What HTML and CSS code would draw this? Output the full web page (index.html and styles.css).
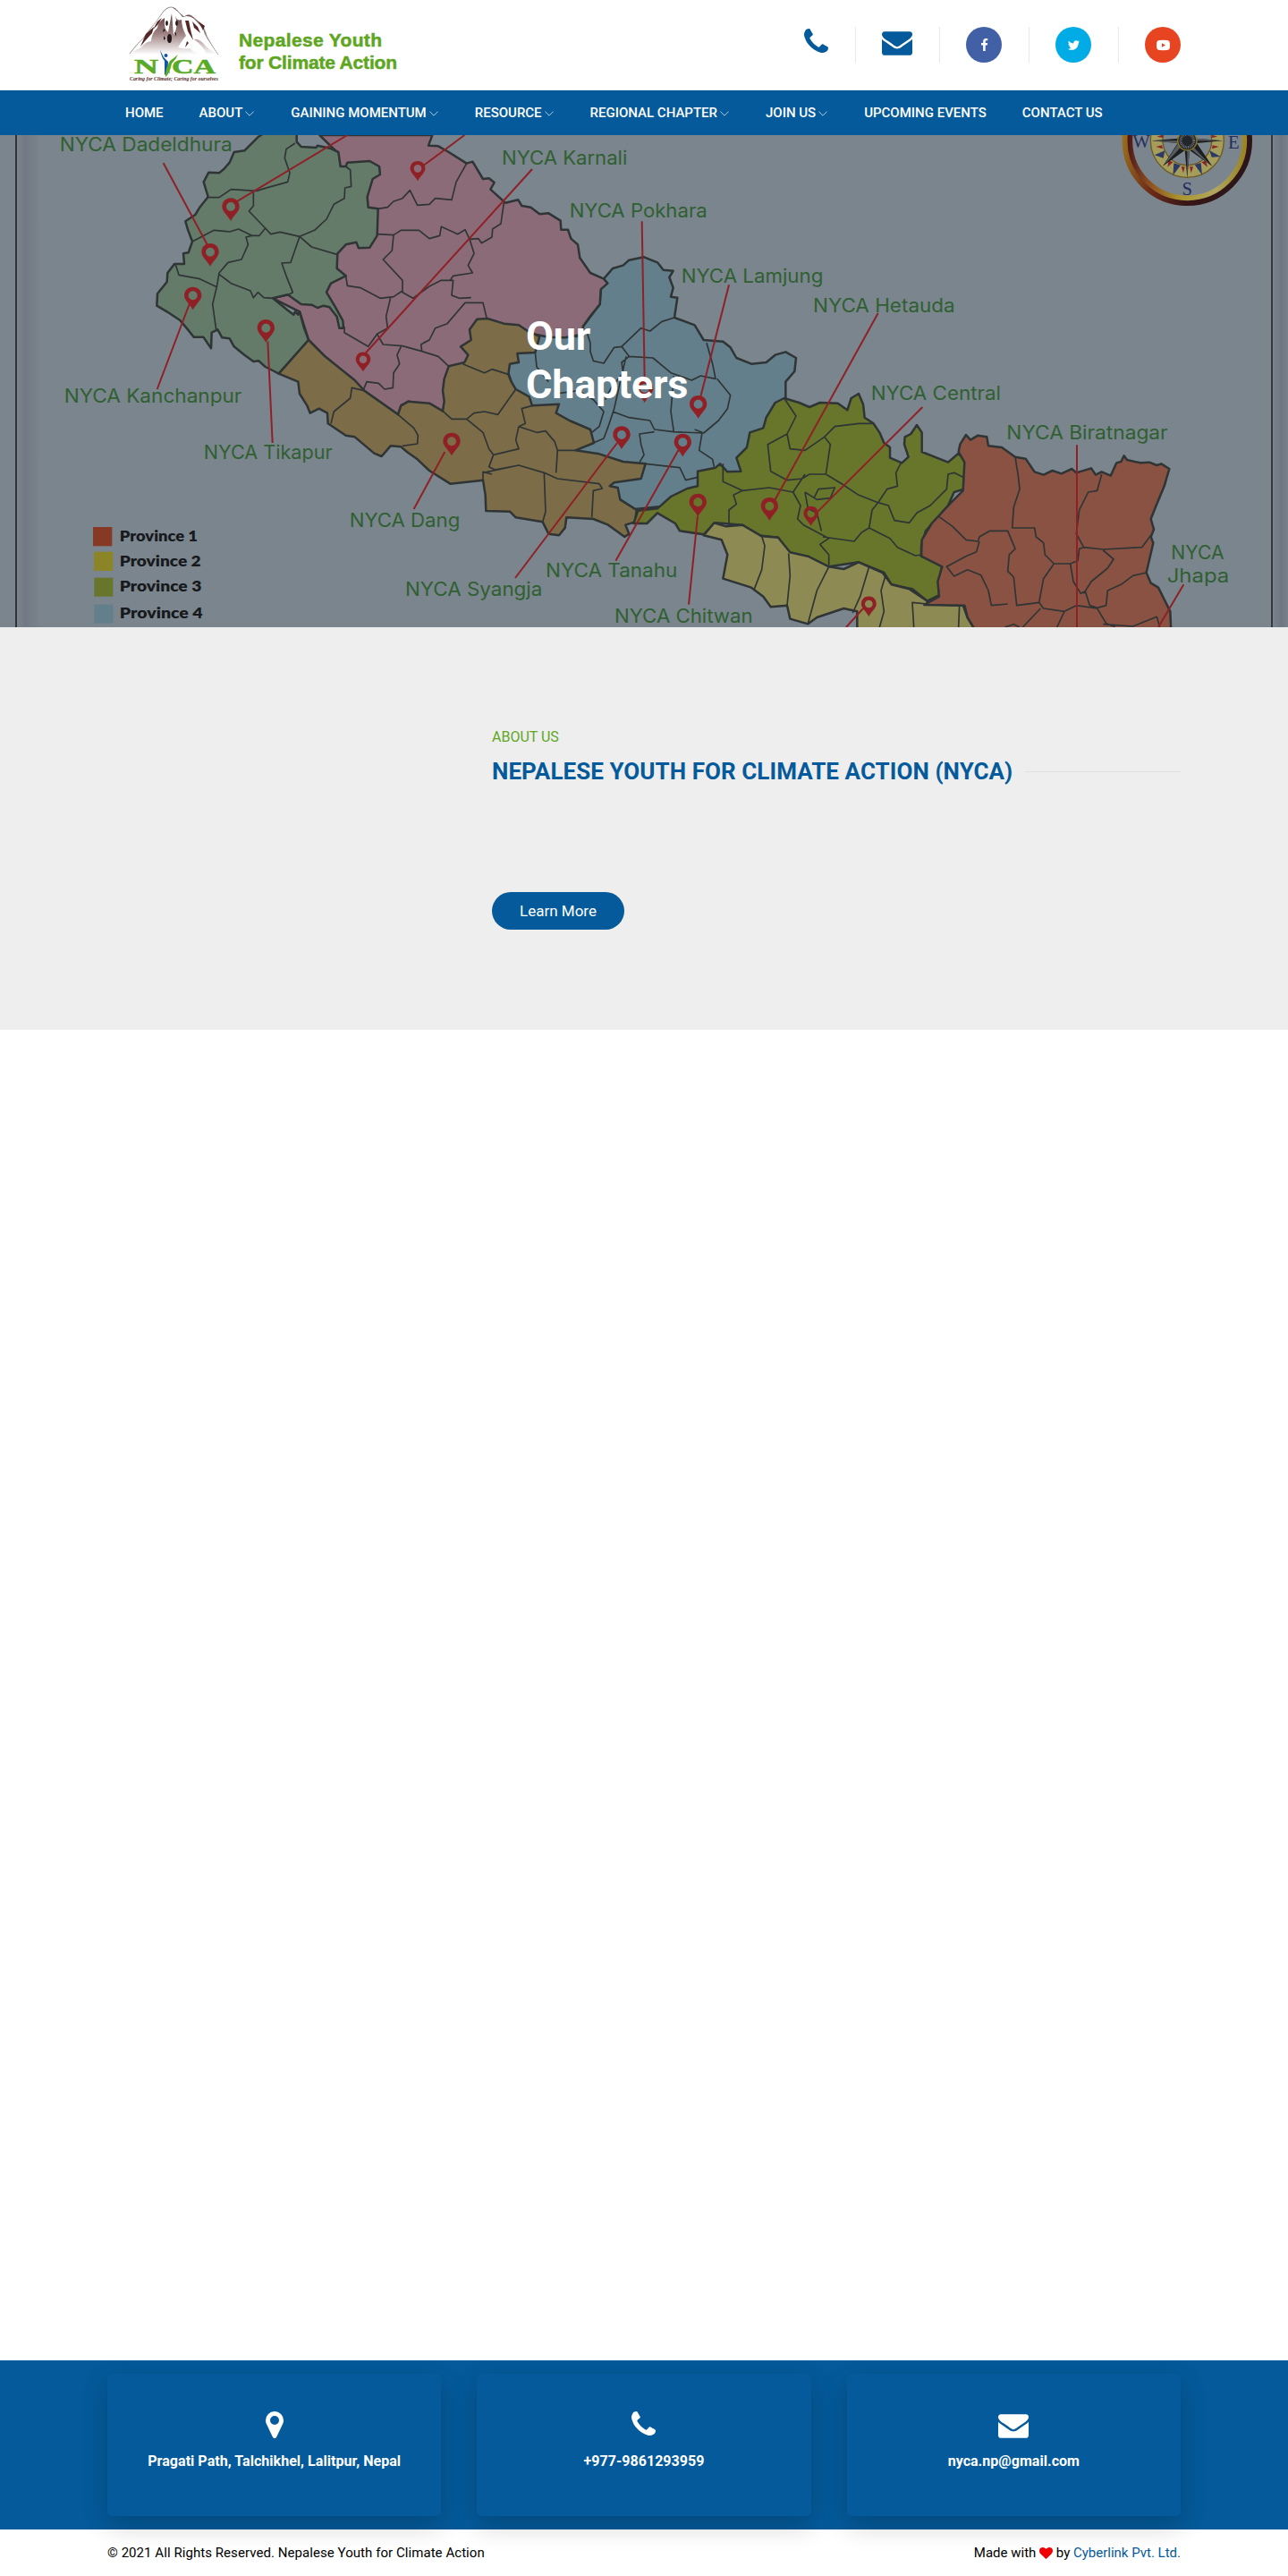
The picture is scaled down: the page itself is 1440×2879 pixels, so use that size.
FILE: index.html
```html
<!DOCTYPE html>
<html lang="en">
<head>
<meta charset="utf-8">
<title>Our Chapters - Nepalese Youth for Climate Action</title>
<link rel="stylesheet" href="styles.css">
</head>
<body>
<svg class="defs" aria-hidden="true">
  <defs>
    <symbol id="i-phone" viewBox="192 128 1408 1408"><path d="M1600 1240q0 27-10 70.5t-21 68.5q-21 50-122 106-94 51-186 51-27 0-53-3.5t-57.5-12.5-47-14.5-55.5-20.5-49-18q-98-35-175-83-127-79-264-216t-216-264q-48-77-83-175-3-9-18-49t-20.5-55.5-14.5-47-12.5-57.5-3.5-53q0-92 51-186 56-101 106-122 25-11 68.5-21t70.5-10q14 0 21 3 18 6 53 76 11 19 30 54t35 63.5 31 53.5q3 4 17.5 25t21.5 35.5 7 28.5q0 20-28.5 50t-62 55-62 53-28.5 46q0 9 5 22.5t8.5 20.5 14 24 11.5 19q76 137 174 235t235 174q2 1 19 11.5t24 14 20.5 8.5 22.5 5q18 0 46-28.5t53-62 55-62 50-28.5q14 0 28.5 7t35.5 21.5 25 17.5q25 15 53.5 31t63.5 35 54 30q70 35 76 53 3 7 3 21z"/></symbol>
    <symbol id="i-mail" viewBox="0 256 1792 1408"><path d="M1792 710v794q0 66-47 113t-113 47h-1472q-66 0-113-47t-47-113v-794q44 49 101 87 362 246 497 345 57 42 92.5 65.5t94.5 48 110 24.5h2q51 0 110-24.5t94.5-48 92.5-65.5q170-123 498-345 57-39 100-87zm0-294q0 79-49 151t-122 123q-376 261-468 325-10 7-42.5 31t-54 38.5-52 32.5-57.5 27-50 9h-2q-23 0-50-9t-57.5-27-52-32.5-54-38.5-42.5-31q-91-64-262-182.5t-205-142.5q-62-42-117-115.5t-55-136.5q0-78 41.5-130t118.5-52h1472q65 0 112.5 47t47.5 113z"/></symbol>
    <symbol id="i-marker" viewBox="384 128 1024 1536"><path d="M1152 640q0-106-75-181t-181-75-181 75-75 181 75 181 181 75 181-75 75-181zm256 0q0 109-33 179l-364 774q-16 33-47.5 52t-67.5 19-67.5-19-46.5-52l-365-774q-33-70-33-179 0-212 150-362t362-150 362 150 150 362z"/></symbol>
    <symbol id="i-facebook" viewBox="0 0 1792 1792"><path d="M1343 12v264h-157q-86 0-116 36t-30 108v189h293l-39 296h-254v759h-306v-759h-255v-296h255v-218q0-186 104-288.5t277-102.5q147 0 228 12z"/></symbol>
    <symbol id="i-twitter" viewBox="0 0 1792 1792"><path d="M1684 408q-67 98-162 167 1 14 1 42 0 130-38 259.5t-115.5 248.5-184.5 210.5-258 146-323 54.5q-271 0-496-145 35 4 78 4 225 0 401-138-105-2-188-64.5t-114-159.5q33 5 61 5 43 0 85-11-112-23-185.5-111.5t-73.5-205.5v-4q68 38 146 41-66-44-105-115t-39-154q0-88 44-163 121 149 294.5 238.5t371.5 99.5q-8-38-8-74 0-134 94.5-228.5t228.5-94.5q140 0 236 102 109-21 205-78-37 115-142 178 93-10 186-50z"/></symbol>
    <symbol id="i-youtube" viewBox="0 0 15 15"><path fill-rule="evenodd" d="M3 2Q7.500 1.500 12 2Q14.600 2.100 14.800 4.500Q15.100 7.500 14.800 10.500Q14.600 12.800 12 13Q7.500 13.300 3 13Q.4 12.800.2 10.500Q-.1 7.500.2 4.500Q.4 2.100 3 2ZM6 5.200V9.800L10 7.500Z"/></symbol>
    <symbol id="i-heart" viewBox="0 128 1792 1536"><path d="M896 1664q-26 0-44-18l-624-602q-10-8-27.500-26t-55.500-65.500-68-97.500-53.500-121-23.500-138q0-220 127-344t351-124q62 0 126.500 21.500t120 58 95.500 68.500 76 68q36-36 76-68t95.500-68.500 120-58 126.500-21.500q224 0 351 124t127 344q0 221-229 450l-623 600q-18 18-44 18z"/></symbol>
    <symbol id="i-down" viewBox="0 0 10 6"><path d="M.4.6 5 5.200 9.600.6" fill="none" stroke="currentColor" stroke-width=".7"/></symbol>
    <g id="pin"><path fill-rule="evenodd" d="M0-29C17-29 29-17 29 0C29 16 12 27 0 48C-12 27-29 16-29 0C-29-17-17-29 0-29ZM0-15A15 15 0 1 0 0 15A15 15 0 1 0 0-15Z"/></g>
  </defs>
</svg>

<header class="top">
  <div class="wrap top-row">
    <a class="brand" href="#">
      <svg width="330" height="100" viewBox="120 0 330 100">
        <defs><linearGradient id="rock" x1="0" y1="0" x2="0" y2="1"><stop offset="0" stop-color="#4d2626"/><stop offset=".55" stop-color="#9d8080"/><stop offset="1" stop-color="#fff"/></linearGradient></defs>
        <path d="M145 60Q153 49 160 43L169 31Q176 23 181 15Q186 8 191 8Q196 8 200 14L206 19Q211 14 217 20L224 26Q229 32 231 40Q236 50 244 61Z" fill="url(#rock)"/>
        <path d="M192 8Q199 12 204 19Q211 16 217 21L227 32Q228 38 232 44L243 60Q233 56 227 48Q221 43 217 44Q228 52 231 61Q220 62 212 54Q206 55 199 53Q205 43 208 40Q203 30 203 22Q198 24 196 18Q200 30 194 39L192 15L188 36Q183 33 184 20Q177 24 176 31Q169 38 169 46Q162 47 158 53Q152 55 146 60Q155 48 163 39L178 19Q186 7 192 8Z" fill="#fff"/>
        <path d="M145 60Q153 49 160 43L169 31Q176 23 181 15Q186 8 191 8Q196 8 200 14L206 19Q211 14 217 20L224 26Q229 32 231 40Q236 50 244 61" fill="none" stroke="#77706f" stroke-width=".8" stroke-dasharray="2 .5"/>
        <g fill="#552727"><path d="M181 20l-5 4-5 9 6-6zM207 23l3 12 6 10-3-12-2-10zM215 24l6 6 3 7-7-6zM222 24l7 5-2 5zM163 38l9-8-2 7-8 9-5 6zM209 46l2 2-4 5z"/></g>
        <g fill="#231818"><ellipse cx="189.500" cy="43" rx="2.500" ry="5"/><ellipse cx="186.500" cy="26" rx="1.400" ry="3"/><ellipse cx="197.500" cy="26" rx="1.400" ry="3"/><path d="M183 32l2 2-3 2zM183 40l2 3-2 2zM195 36l2 1v4z"/></g>
        <g class="logo-serif">
          <text x="150" y="82" font-size="22.500" textLength="27" lengthAdjust="spacingAndGlyphs">N</text>
          <text x="192" y="82" font-size="22.500" textLength="49" lengthAdjust="spacingAndGlyphs">CA</text>
        </g>
        <path d="M179 56Q181 65 184 68V84Q187 79 190 82Q187 76 188 69L183 64Z" fill="#0f55a8"/>
        <path d="M199 61Q193 66 190 68Q184 78 185 86Q190 82 192 71Q197 66 199 61Z" fill="#58ab26"/>
        <circle cx="185.500" cy="62" r="2" fill="#0f55a8"/>
        <text class="logo-script" x="145" y="90" textLength="99" lengthAdjust="spacingAndGlyphs">Caring for Climate; Caring for ourselves</text>
        <g class="logo-name">
          <text x="267" y="52" textLength="160">Nepalese Youth</text>
          <text x="267" y="77" textLength="177">for Climate Action</text>
        </g>
      </svg>
    </a>
    <ul class="contacts">
      <li><svg class="phone"><use href="#i-phone"/></svg></li>
      <li><svg class="mail"><use href="#i-mail"/></svg></li>
      <li><span class="disc facebook"><svg><use href="#i-facebook"/></svg></span></li>
      <li><span class="disc twitter"><svg><use href="#i-twitter"/></svg></span></li>
      <li><span class="disc youtube"><svg><use href="#i-youtube"/></svg></span></li>
    </ul>
  </div>
</header>

<nav class="nav">
  <ul class="wrap">
    <li>HOME</li>
    <li class="drop">ABOUT<svg><use href="#i-down"/></svg></li>
    <li class="drop">GAINING MOMENTUM<svg><use href="#i-down"/></svg></li>
    <li class="drop">RESOURCE<svg><use href="#i-down"/></svg></li>
    <li class="drop">REGIONAL CHAPTER<svg><use href="#i-down"/></svg></li>
    <li class="drop">JOIN US<svg><use href="#i-down"/></svg></li>
    <li>UPCOMING EVENTS</li>
    <li>CONTACT US</li>
  </ul>
</nav>

<section class="hero">
  <svg class="map" viewBox="0 3 4320 1650" preserveAspectRatio="none">
    <defs>
      <linearGradient id="edgeL"><stop offset="0" stop-color="#7a858d"/><stop offset=".35" stop-color="#727984"/><stop offset="1" stop-color="#7a858d"/></linearGradient>
      <linearGradient id="edgeR"><stop offset="0" stop-color="#78838b"/><stop offset=".55" stop-color="#6f7681"/><stop offset="1" stop-color="#78828b"/></linearGradient>
      <linearGradient id="brass" x1="0" y1=".3" x2="1" y2=".5"><stop offset="0" stop-color="#9c701c"/><stop offset=".3" stop-color="#6f2c18"/><stop offset=".6" stop-color="#371617"/><stop offset="1" stop-color="#2c1619"/></linearGradient>
      <linearGradient id="brass2" x1="0" y1=".4" x2="1" y2=".5"><stop offset="0" stop-color="#4c191b"/><stop offset=".2" stop-color="#8a4b22"/><stop offset=".5" stop-color="#ac962d"/><stop offset=".8" stop-color="#b0a660"/><stop offset="1" stop-color="#9b8528"/></linearGradient>
    </defs>
    <rect y="3" width="4320" height="1650" fill="#7a858d"/>
    <rect x="57" y="3" width="80" height="1650" fill="url(#edgeL)"/>
    <path d="M54 3V1653" stroke="#2f3237" stroke-width="6"/>
    <rect x="4269" y="3" width="51" height="1650" fill="url(#edgeR)"/>
    <path d="M4266 3V1653" stroke="#35393d" stroke-width="6"/>

    <g class="province">
      <path fill="#637f8b" d="M2025 485L2055 450 2090 440 2110 422 2160 412 2205 430 2225 455 2258 458 2245 480 2258 515 2250 545 2272 548 2262 615 2330 640 2360 690 2425 695 2450 715 2470 750 2520 770 2570 765 2600 740 2635 730 2670 750 2665 795 2635 830V875L2640 1100 2300 1240 2130 1257 2080 1225 2050 1180 1900 1050 1740 900 1690 760 1770 660 1955 680 1955 645 2012 570 2015 520Z"/>
      <path fill="#8c6b78" d="M1072 3H1450L1437 38 1470 40 1505 60 1565 98 1585 92 1620 150 1640 148 1658 162 1645 185 1695 230 1738 220 1750 240 1780 245 1810 268 1840 265 1880 290 1882 320 1905 320 1915 350 1938 370 1945 415 1980 465 2025 485 2038 500 2015 520 2012 570 1980 610 1955 645 1960 670 1895 682 1840 680 1740 660 1640 720 1540 800 1485 928 1370 896 1345 910 1335 940 1222 860 1090 745 1035 690 1005 595 915 550 965 538 1130 450 1130 60Z"/>
      <path fill="#647b69" d="M895-10L865 10 835 40 820 55 785 60 770 95 750 118 735 130 700 128 683 160 698 210 670 245 655 270 622 292 630 320 645 360 632 397 615 400 618 435 585 435 562 465 560 495 528 535 526 575 560 595 605 625 630 655 650 680 682 680 708 718 710 665 730 655 745 682 770 685 785 712 820 740 850 762 868 760 890 780 920 795 935 803 1035 690 1020 650 1005 595 1000 605 990 595 985 605 965 590 940 570 915 550 965 538 1010 570 1045 572 1065 582 1085 575 1105 580 1130 612 1138 650 1152 650 1150 625 1125 580 1095 530 1110 500 1160 475 1130 450 1132 400 1160 370 1195 362 1203 382 1240 380 1265 340 1268 250 1235 245 1232 210 1250 150 1275 135 1272 108 1240 90 1165 95 1160 108 1142 108 1135 60 1110 48 1065 38 1060 45 1010 42 995 25V-10Z"/>
      <path fill="#7c6c48" d="M1035 690L1090 745 1190 825 1222 860 1335 940 1345 910 1370 896 1440 902 1485 928 1490 895 1485 860 1490 820 1505 778 1558 765 1570 740 1545 712 1580 690 1575 655 1600 620 1635 618 1690 635 1740 640 1770 660 1810 678 1795 732 1735 735 1740 765 1710 770 1705 805 1715 830 1730 855 1775 880 1785 910 1875 905 1865 935 1910 960 1980 990 1992 1035 1930 1060 2010 1072 2090 1098 2165 1105 2150 1155 2060 1168 2045 1180 2072 1185 2080 1225 2135 1260 2130 1300 2098 1310 2110 1340 2095 1350 2040 1310 1990 1290 1900 1285 1895 1320 1875 1345 1840 1340 1820 1300 1730 1285 1710 1265 1630 1263 1628 1210 1620 1160 1510 1172 1440 1128 1400 1090 1365 1065 1345 1048 1310 1045 1280 1080 1255 1070 1190 1015 1160 1010 1100 970 1098 935 1070 920 1040 935 1030 910 1005 870 1000 830 935 803Z"/>
      <path fill="#67762b" d="M2630 885L2680 900 2715 915 2750 900 2810 902 2842 925 2855 885 2880 870 2895 905 2900 950 2930 970 2950 1000 2965 1035 2985 1050 2985 1085 3025 1102 3047 1082 3033 1040 3035 1015 3055 1005 3075 975 3092 1000 3092 1065 3180 1100 3215 1070 3240 1100 3233 1190 3200 1200 3180 1245 3150 1280 3105 1330 3090 1380 3090 1415 3160 1445 3148 1510 3150 1545 3110 1565 3060 1525 2990 1510 2965 1470 2880 1435 2780 1450 2640 1400 2610 1352 2540 1345 2490 1310 2400 1303 2360 1342 2280 1330 2265 1305 2205 1270 2170 1305 2125 1305 2140 1262 2205 1255 2250 1215 2305 1188 2340 1180V1130L2400 1118 2415 1105 2440 1132 2485 1130 2470 1085 2505 1050 2515 1000 2560 985 2570 950 2600 900Z"/>
      <path fill="#8e8a53" d="M2395 1303L2435 1315 2490 1310 2555 1348 2610 1352 2650 1402 2710 1415 2780 1450 2830 1458 2880 1435 2960 1470 2990 1510 3050 1525 3110 1565 3110 1575 3230 1580 3245 1620 3275 1670H2875V1600L2830 1590 2740 1620 2710 1642 2650 1625 2640 1580 2585 1585 2560 1550 2520 1520 2425 1490 2440 1410 2420 1360 2360 1345Z"/>
      <path fill="#8a5243" d="M3215 1065L3220 1040 3240 1008 3255 1025 3280 1010 3310 1015 3315 1045 3360 1050 3405 1082 3440 1088 3470 1132 3500 1142 3530 1128 3560 1138 3595 1122 3610 1135 3660 1120 3675 1142 3695 1132 3725 1145 3745 1102 3760 1098 3770 1078 3780 1092 3825 1102 3855 1100 3880 1110 3895 1105 3922 1122 3905 1180 3880 1240 3860 1290 3870 1325 3860 1350 3868 1370 3845 1470 3860 1505 3885 1520 3905 1560 3925 1600 3928 1670H3275L3245 1620 3235 1580 3100 1578 3150 1550 3145 1500 3160 1450 3090 1415 3092 1360 3125 1305 3185 1240 3230 1195 3235 1100Z"/>
    </g>

    <g class="district">
      <path d="M990 30L960 50 955 80 972 130 965 160 900 178 860 190 775 185 735 212H700M850 190V240L835 258 890 315 870 340 845 340 800 318 770 327 718 322 645 360M890 315L908 335 940 328 1005 343 1055 322 1095 285 1120 235 1155 215 1157 180 1178 175 1175 120 1160 108M1005 343L1045 378 1130 403M1005 343L975 430 945 432 960 475 982 530 965 540M845 340L825 345 832 370 810 420 765 430 735 465 727 512 670 485 600 472 588 435M735 470L775 500 840 525 850 548 865 530 885 548 915 550M727 512L713 570 725 655"/>
      <path d="M1268 250L1300 245 1320 225 1350 215 1375 188 1400 238 1440 235 1460 215 1515 220 1530 160 1565 98M1265 335L1320 338 1345 322 1405 322 1440 350 1475 340 1480 310 1535 335 1560 320 1575 352 1605 350 1615 365 1650 345 1652 318 1680 300 1690 230M1320 338L1315 390 1285 420 1350 490V530L1385 550 1440 510 1480 490 1520 490 1515 540 1540 550 1580 548M1160 475L1165 508 1210 515 1275 550 1320 545 1350 525M1310 548L1295 610 1300 650 1265 670 1235 712 1155 665V645M1575 352L1590 400 1570 440 1585 465 1520 475 1510 490M1265 670L1285 705 1350 710 1415 728 1412 705 1440 690 1460 650 1500 635 1560 565 1620 565 1632 615M1345 712L1332 740 1340 770 1320 800 1318 850 1290 855 1270 835 1230 830 1220 855M1440 690L1420 700M1415 728L1470 745 1505 778"/>
      <path d="M1222 860L1180 850 1175 885 1120 930 1110 970M1335 940L1388 985 1402 1010 1400 1038 1350 1045M1485 928L1515 955 1565 955 1620 1000 1640 1055 1655 1075 1640 1115 1660 1125 1740 1110 1825 1135 1870 1155 2010 1172 2020 1188 1990 1195 1985 1285M1565 955L1590 935 1625 930 1670 940 1730 855M1552 770L1625 800 1650 788 1705 805M1785 910L1750 920 1762 970 1740 980 1730 1025 1740 1055 1655 1075M1740 980L1800 1000 1830 995 1860 1030 1870 1060 1930 1060M1870 1060L1865 1135M1620 1135L1740 1110M1825 1135L1830 1265 1820 1300M1620 1160V1132L1650 1140"/>
      <path d="M1810 675L1795 730 1800 780 1840 830M1970 670L1980 700V730L1990 760 2025 768 2060 715 2085 712 2150 650 2180 660 2220 628 2262 615M2085 712L2110 745 2190 750 2250 800 2320 825 2350 810 2400 820 2390 770 2370 700M2110 745L2085 765 2090 800 2050 850 2030 890M1865 870L1940 860 1990 890 2025 930 2010 980 1985 1000M2100 745L2060 920 2040 980 2025 1020 1990 1035M2055 930L2110 950 2180 960 2195 990 2260 998 2360 1002 2410 960 2440 920 2450 875 2405 820M2260 810L2250 930 2260 998M2195 998L2145 1005 2150 1040 2160 1075 2145 1100M2165 1105L2280 1118 2300 1160 2340 1150M2330 990L2355 1000 2345 1060 2390 1090 2395 1115"/>
      <path d="M2630 885L2670 945 2640 1005 2575 1040 2585 1130 2640 1160 2690 1155 2715 1140 2770 1140 2785 1040 2765 1015M2640 1005L2650 1055 2700 1060 2765 1015 2800 980 2880 970 2930 970M2425 1105V1165L2490 1195 2580 1185 2660 1200 2700 1140M2490 1195L2460 1210 2470 1240 2445 1260V1310M2660 1200L2685 1245 2675 1290 2695 1310 2780 1355 2750 1375 2780 1410 2780 1445M2770 1140L2820 1170 2880 1210 2945 1235 2925 1260 2915 1320 2890 1335 2865 1365 2760 1350M2700 1200L2710 1255 2740 1270 2755 1330M2700 1200L2740 1225 2785 1220 2800 1185 2745 1190 2730 1220M3022 1102L3005 1135 3010 1180 2975 1190 2945 1235 2980 1245 3000 1295 3050 1303 3075 1270 3120 1245 3175 1190 3180 1140 3200 1135 3230 1150M2915 1320L2985 1355 3010 1385 3070 1413 3090 1410"/>
      <path d="M2555 1348L2565 1380 2555 1460 2530 1525M2645 1405L2650 1480 2640 1580M2780 1450L2740 1530 2710 1640M2915 1450L2885 1550 2860 1605M2970 1480L2955 1530 2965 1600 2950 1653M3110 1575L3060 1570 3065 1653M3218 1580L3215 1653"/>
      <path d="M3405 1082L3415 1145 3420 1190 3400 1250 3395 1320 3470 1320 3475 1350 3500 1370 3505 1410 3535 1440 3500 1490 3485 1570 3410 1580 3400 1485 3380 1465 3385 1410 3405 1390 3380 1330 3320 1330 3285 1350 3280 1365 3240 1360 3195 1315 3150 1283M3285 1365L3275 1400 3240 1415 3175 1450 3200 1482 3245 1460 3290 1478 3315 1530 3325 1580 3380 1575M3695 1140L3680 1195 3650 1200 3620 1260 3610 1340 3635 1385 3700 1392 3830 1385 3860 1345M3535 1440L3590 1440 3615 1430 3620 1390 3635 1385M3590 1440L3600 1500 3625 1540 3640 1532 3655 1580 3680 1588 3710 1580 3715 1530 3760 1510 3800 1480 3845 1470M3700 1395L3735 1425 3715 1455 3660 1500 3635 1540M3485 1570L3500 1590 3570 1600 3610 1580 3680 1590 3710 1640 3740 1652M3490 1590L3430 1653M3570 1600L3545 1653M3700 1643L3800 1650 3880 1618 3890 1653M3370 1653L3400 1643 3420 1653"/>
    </g>

    <g class="leader">
      <path d="M548 97L695 370M792 227L1165 3M1420 105L1558 3M1785 117L1225 735M2153 292L2162 820M2445 505L2350 880M2945 600L2597 1230M3094 915L2740 1268M3612 1042V1653M3970 1510L3885 1653M635 570L527 855M898 695L914 1035M1492 1065L1388 1257M2070 1035L1728 1488M2275 1060L2065 1430M2340 1280L2310 1577M2895 1590L2838 1653"/>
    </g>
    <g fill="#8f2126">
      <use href="#pin" x="774" y="243"/><use href="#pin" x="705" y="395"/><use href="#pin" x="647" y="541"/><use href="#pin" x="892" y="650"/>
      <use href="#pin" transform="translate(1218 755) scale(.85)"/><use href="#pin" transform="translate(1401 115) scale(.87)"/>
      <use href="#pin" x="1515" y="1030"/><use href="#pin" x="2085" y="1008"/><use href="#pin" x="2342" y="905"/><use href="#pin" x="2290" y="1033"/><use href="#pin" x="2341" y="1234"/><use href="#pin" x="2581" y="1247"/><use href="#pin" x="2162" y="852"/>
      <use href="#pin" transform="translate(2720 1272) scale(.85)"/><use href="#pin" transform="translate(2914 1575) scale(.87)"/>
    </g>

    <g class="place">
      <text x="200" y="58" textLength="579" lengthAdjust="spacingAndGlyphs">NYCA Dadeldhura</text>
      <text x="1683" y="102" textLength="421" lengthAdjust="spacingAndGlyphs">NYCA Karnali</text>
      <text x="1910" y="280" textLength="462" lengthAdjust="spacingAndGlyphs">NYCA Pokhara</text>
      <text x="2285" y="498" textLength="476" lengthAdjust="spacingAndGlyphs">NYCA Lamjung</text>
      <text x="2727" y="597" textLength="476" lengthAdjust="spacingAndGlyphs">NYCA Hetauda</text>
      <text x="215" y="900" textLength="596" lengthAdjust="spacingAndGlyphs">NYCA Kanchanpur</text>
      <text x="683" y="1090" textLength="432" lengthAdjust="spacingAndGlyphs">NYCA Tikapur</text>
      <text x="1172" y="1318" textLength="371" lengthAdjust="spacingAndGlyphs">NYCA Dang</text>
      <text x="1359" y="1548" textLength="460" lengthAdjust="spacingAndGlyphs">NYCA Syangja</text>
      <text x="1830" y="1484" textLength="442" lengthAdjust="spacingAndGlyphs">NYCA Tanahu</text>
      <text x="2061" y="1637" textLength="464" lengthAdjust="spacingAndGlyphs">NYCA Chitwan</text>
      <text x="2921" y="892" textLength="436" lengthAdjust="spacingAndGlyphs">NYCA Central</text>
      <text x="3376" y="1022" textLength="541" lengthAdjust="spacingAndGlyphs">NYCA Biratnagar</text>
      <text x="3928" y="1425" textLength="178" lengthAdjust="spacingAndGlyphs">NYCA</text>
      <text x="3914" y="1503" textLength="209" lengthAdjust="spacingAndGlyphs">Jhapa</text>
    </g>
    <g class="legend">
      <rect x="312" y="1317" width="64" height="64" fill="#863a26"/><rect x="315" y="1400" width="64" height="64" fill="#8c8528"/><rect x="316" y="1487" width="63" height="63" fill="#67762b"/><rect x="316" y="1577" width="63" height="63" fill="#637f8b"/>
      <text x="401" y="1364" textLength="262" lengthAdjust="spacingAndGlyphs">Province 1</text>
      <text x="401" y="1448" textLength="273" lengthAdjust="spacingAndGlyphs">Province 2</text>
      <text x="401" y="1532" textLength="275" lengthAdjust="spacingAndGlyphs">Province 3</text>
      <text x="401" y="1622" textLength="279" lengthAdjust="spacingAndGlyphs">Province 4</text>
    </g>

    <g class="compass" transform="translate(3982 22)">
      <circle r="206" fill="none" stroke="url(#brass)" stroke-width="24"/>
      <circle r="192" fill="none" stroke="url(#brass2)" stroke-width="17"/>
      <circle r="103" fill="none" stroke="#a59d5c" stroke-width="42"/>
      <circle r="123" fill="none" stroke="#6d5a24" stroke-width="4"/><circle r="82" fill="none" stroke="#6d5a24" stroke-width="4"/>
      <path fill="#2d3a68" d="M-75 33L-110 48-80 58ZM-45 75L-48 116-22 82ZM75 33L112 53 82 55ZM25 80L50 115 46 74Z"/>
      <path fill="#8c2327" d="M-85 15L-105 20-82 27ZM-62 66L-66 88-48 72ZM-20 87L-13 108-8 87ZM85 15L106 20 83 27ZM62 66L68 88 48 72ZM20 87L13 108 8 87ZM-82-10L-102-14-82-20ZM82-10L102-14 82-20Z"/>
      <path fill="#1c1e21" d="M0 125L-8 32-82 85-32 8-120 0-30-8-10-40H10L30-8 120 0 32 8 84 85 8 32Z"/>
      <path fill="#575b5e" d="M0 120V30L8 32ZM-120 0H-30V8ZM120 0H30V-8ZM-80 84L-22 22-31 10ZM80 84L22 22 15 30Z"/>
      <circle r="32" fill="#22252a" stroke="#8a7626" stroke-width="4"/><circle r="22" fill="none" stroke="#858c90" stroke-width="9" stroke-dasharray="2 3"/>
      <text x="-154" y="23">W</text><text x="156" y="25">E</text><text x="0" y="181">S</text>
    </g>
  </svg>
  <div class="hero-copy"><h1>Our<br>Chapters</h1></div>
</section>

<section class="about">
  <div class="about-copy">
    <p class="kicker">ABOUT US</p>
    <div class="heading"><h2>NEPALESE YOUTH FOR CLIMATE ACTION (NYCA)</h2><span class="rule"></span></div>
    <a class="button" href="#">Learn More</a>
  </div>
</section>

<main class="content"></main>

<footer>
  <div class="cards-band">
    <div class="wrap cards">
      <div class="card"><svg class="marker"><use href="#i-marker"/></svg><p>Pragati Path, Talchikhel, Lalitpur, Nepal</p></div>
      <div class="card"><svg class="phone"><use href="#i-phone"/></svg><p>+977-9861293959</p></div>
      <div class="card"><svg class="mail"><use href="#i-mail"/></svg><p>nyca.np@gmail.com</p></div>
    </div>
  </div>
  <div class="wrap copyright">
    <span>© 2021 All Rights Reserved. Nepalese Youth for Climate Action</span>
    <span>Made with <svg class="heart"><use href="#i-heart"/></svg> by <a href="#">Cyberlink Pvt. Ltd.</a></span>
  </div>
</footer>
</body>
</html>
```
FILE: styles.css
```css
* { box-sizing: border-box; }
body { margin: 0; background: #fff; color: #000; font: 400 16px/24px Roboto, sans-serif; }
ul { list-style: none; margin: 0; padding: 0; }
h1, h2, p { margin: 0; }
a { color: inherit; text-decoration: none; }
svg { fill: currentColor; display: block; }
.defs { position: absolute; width: 0; height: 0; }
.wrap { width: 1200px; margin: 0 auto; }

.top { height: 101px; border-bottom: 1px solid #e8eef0; }
.top-row { display: flex; justify-content: space-between; height: 100px; }
.logo-serif { fill: #58ab26; font-family: "Liberation Serif", serif; font-weight: 700; stroke: #58ab26; stroke-width: .5; }
.logo-script { fill: #552727; font: italic 700 6.5px "Liberation Serif", serif; }
.logo-name { fill: #5ea61f; stroke: #5ea61f; stroke-width: .5; font: 700 21px "Liberation Sans", sans-serif; }
.contacts { display: flex; align-items: center; color: #045a9a; }
.contacts li { display: flex; align-items: flex-start; height: 40px; padding: 0 30px 0 29px; border-left: 1px solid #e9e9e9; }
.contacts li:first-child { border-left: 0; }
.contacts li:last-child { padding-right: 0; }
.phone { width: 27px; height: 27px; }
.mail { width: 34px; height: 27px; }
.contacts .phone { margin-top: 2px; }
.contacts .mail { margin-top: 5px; }
.disc { display: grid; place-items: center; width: 40px; height: 40px; border-radius: 50%; color: #fff; }
.disc svg { width: 15px; height: 15px; }
.facebook { background: #4160a5; }
.twitter { background: #00abe6; }
.youtube { background: #e74522; }

.nav { height: 50px; background: #045a9a; color: #fff; }
.nav ul { display: flex; padding-left: 20px; gap: 40px; }
.nav li { display: flex; align-items: center; height: 50px; font-size: 15px; font-weight: 500; white-space: nowrap; }
.nav li svg { width: 10px; height: 6px; margin: 2px 1px 0 3px; }

.hero { position: relative; height: 550px; overflow: hidden; background: #7a858d; }
.map { position: absolute; inset: 0; width: 100%; height: 100%; }
.province { stroke: #2f3435; stroke-width: 7.5; stroke-linejoin: round; }
.district { fill: none; stroke: #2f3435; stroke-width: 5; stroke-linejoin: round; }
.leader { fill: none; stroke: #8f2126; stroke-width: 6; }
.place { fill: #306032; font: 400 63px Inter, sans-serif; }
.legend { fill: #17191c; font: 800 50px Lato, sans-serif; }
.compass text { fill: #262c5d; font: 62px "Liberation Serif", serif; text-anchor: middle; }
.hero-copy { position: relative; display: flex; align-items: center; width: 264px; height: 100%; margin: 0 auto; color: #fff; }
.hero-copy h1 { font-size: 45px; line-height: 54px; font-weight: 700; letter-spacing: -.25px; padding-bottom: 47px; }

.about { height: 450px; background: #eee; }
.about-copy { display: flex; flex-direction: column; align-items: flex-start; width: 770px; margin-left: 550px; padding-top: 111px; }
.kicker { color: #5ea61f; }
.heading { display: flex; align-items: center; gap: 14px; width: 100%; margin-top: 10px; }
.heading h2 { color: #045a9a; font-size: 26px; line-height: 32px; font-weight: 700; letter-spacing: .07px; white-space: nowrap; }
.rule { flex: 1; height: 1px; background: #e2e2e2; }
.button { display: grid; place-items: center; width: 148px; height: 42px; margin-top: 119px; border-radius: 21px; background: #045a9a; color: #fff; font-size: 17px; }

.content { height: 1487px; }
.cards-band { height: 189px; padding-top: 15px; background: #045a9a; }
.cards { display: grid; grid-template-columns: repeat(3, 1fr); gap: 40px; }
.card { display: flex; flex-direction: column; align-items: center; height: 159px; padding-top: 42px; border-radius: 5px; background: #045a9a; box-shadow: 0 10px 30px rgba(0, 0, 0, .2); color: #fff; }
.card p { margin-top: auto; margin-bottom: 48px; font-weight: 700; letter-spacing: .04px; line-height: 26px; }
.marker { width: 20px; height: 30px; }
.card .mail { margin-top: 3px; }
.copyright { display: flex; justify-content: space-between; align-items: center; height: 52px; font-size: 15px; }
.copyright > span:first-child { letter-spacing: .06px; }
.heart { display: inline-block; width: 15px; height: 13px; color: #f00000; vertical-align: -2px; }
.copyright a { color: #045a9a; }
```
